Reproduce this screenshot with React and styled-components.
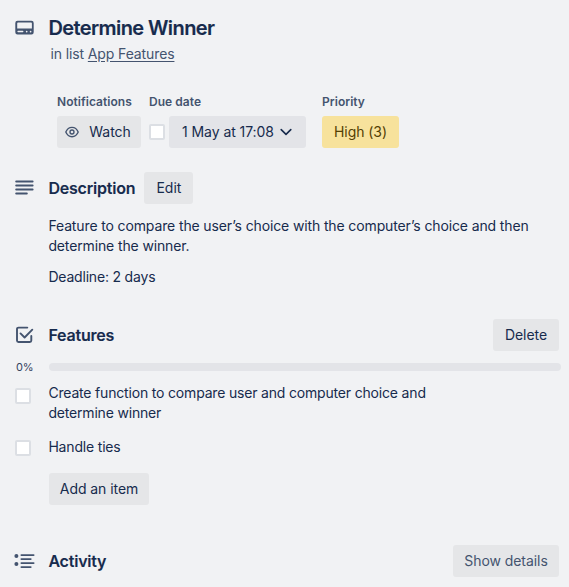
import React from "react";
import styled, { createGlobalStyle } from "styled-components";

const Global = createGlobalStyle`
  * { box-sizing: border-box; }
  body { margin: 0; background: #f1f2f4; }
`;

const Card = styled.main`
  width: 569px;
  height: 587px;
  overflow: hidden;
  background: #f1f2f4;
  color: #172b4d;
  font-family: Inter, "Liberation Sans", sans-serif;
  font-size: 14px;
  line-height: 20px;
  letter-spacing: -0.06px;
`;

const SectionRow = styled.header`
  display: flex;
  align-items: center;
  height: 32px;
  margin-top: ${(p) => p.$top || 0}px;
  padding-right: 10px;
`;

const IconSlot = styled.span`
  display: flex;
  width: 48.4px;
  padding-left: ${(p) => p.$inset ?? 15}px;
  flex: none;
  color: #44546f;
`;

const Title = styled.h1`
  margin: 0;
  font-size: 20px;
  line-height: 24px;
  font-weight: 600;
  letter-spacing: -0.58px;
  -webkit-text-stroke: 0.15px currentColor;
`;

const Heading = styled.h2`
  margin: 0 9px 0 0;
  font-size: 16px;
  line-height: 20px;
  font-weight: 600;
  letter-spacing: -0.2px;
  -webkit-text-stroke: 0.1px currentColor;
`;

const Subtitle = styled.p`
  margin: 0 0 0 50.5px;
  color: #44546f;
  letter-spacing: -0.12px;
`;

const ListLink = styled.a`
  text-decoration: underline;
  text-underline-offset: 2px;
`;

const Details = styled.div`
  display: flex;
  margin: 28px 0 0 57px;
`;

const Detail = styled.section`
  width: ${(p) => p.$width}px;
`;

const Label = styled.h3`
  margin: 0 0 4px;
  color: #44546f;
  font-size: 12px;
  line-height: 20px;
  font-weight: 600;
  letter-spacing: 0.04px;
  white-space: nowrap;
`;

const Controls = styled.div`
  display: flex;
  align-items: center;
`;

const Button = styled.button`
  display: flex;
  align-items: center;
  justify-content: center;
  flex: none;
  width: ${(p) => p.$width}px;
  height: 32px;
  margin-left: ${(p) => (p.$end ? "auto" : "0")};
  padding: 0;
  gap: ${(p) => p.$gap || 0}px;
  border: 0;
  border-radius: 3px;
  background: ${(p) => p.$background || "#e5e6e8"};
  color: ${(p) => p.$color || "#172b4d"};
  font: inherit;
  letter-spacing: inherit;
  white-space: nowrap;
`;

const WatchButton = styled(Button)`
  padding-right: 2px;
`;

const DateButton = styled(Button)`
  padding-right: 1px;
`;

const Checkbox = styled.span`
  flex: none;
  width: 16px;
  height: 16px;
  border: 2px solid #dcdfe4;
  border-radius: 2px;
  background: #fff;
`;

const DueCheckbox = styled(Checkbox)`
  margin-right: 4px;
`;

const Description = styled.div`
  padding: 12px 0 11px 48.4px;
`;

const Paragraph = styled.p`
  margin: 0;
  width: 500px;
  letter-spacing: -0.13px;

  & + & {
    margin-top: 11px;
    letter-spacing: -0.19px;
  }
`;

const Progress = styled.div`
  display: flex;
  align-items: center;
  height: 12px;
  margin-top: 10px;
`;

const Percent = styled.span`
  width: 49px;
  padding-left: 16px;
  color: #34435f;
  font-size: 11px;
  line-height: 12px;
  letter-spacing: -0.2px;
`;

const Track = styled.div`
  width: 512px;
  height: 8px;
  border-radius: 4px;
  background: #e3e4e8;
`;

const Item = styled.div`
  display: flex;
  align-items: flex-start;
  margin-top: ${(p) => p.$top}px;
`;

const CheckSlot = styled.span`
  width: 48.4px;
  flex: none;
  padding: ${(p) => p.$drop}px 0 0 15px;
  display: flex;
`;

const ItemText = styled.span`
  width: 390px;
  letter-spacing: -0.18px;
`;

const AddRow = styled.div`
  padding: 16px 0 0 49px;
`;

const CardIcon = () => (
  <svg width="19" height="16" viewBox="0 0 19 16">
    <path
      fill="currentColor"
      fillRule="evenodd"
      d="M2.5.8h14A2.2 2.2 0 0 1 18.7 3v9.2a2.2 2.2 0 0 1-2.2 2.2h-14a2.2 2.2 0 0 1-2.2-2.2V3A2.2 2.2 0 0 1 2.5.8ZM3 2.6a.8.8 0 0 0-.8.8v5.2h14.7V3.4a.8.8 0 0 0-.8-.8Z"
    />
    <path d="M3.1 11.6h4.6" stroke="#f1f2f4" strokeWidth="1.5" strokeLinecap="round" />
    <circle cx="11.7" cy="11.6" r=".85" fill="#f1f2f4" />
    <circle cx="15.6" cy="11.6" r=".85" fill="#f1f2f4" />
  </svg>
);

const EyeIcon = () => (
  <svg width="14" height="12" viewBox="0 0 14 12" fill="none" stroke="#44546f" strokeWidth="1.35">
    <path d="M.8 6C2 3 4.2 1.3 7 1.3S12 3 13.2 6C12 9 9.8 10.7 7 10.7S2 9 .8 6Z" />
    <circle cx="7" cy="6" r="2" />
  </svg>
);

const ChevronIcon = () => (
  <svg width="12" height="8" viewBox="0 0 12 8" fill="none" stroke="#172b4d" strokeWidth="1.6" strokeLinecap="round" strokeLinejoin="round">
    <path d="m1.2 1.6 4.8 4.8 4.8-4.8" />
  </svg>
);

const LinesIcon = () => (
  <svg width="19" height="16" viewBox="0 0 19 16" fill="none" stroke="currentColor" strokeWidth="2" strokeLinecap="round">
    <path d="M1.2 1.6h16.4M1.2 5.6h16.4M1.2 9.6h16.4M1.2 13.6h10.6" />
  </svg>
);

const CheckIcon = () => (
  <svg width="19" height="18" viewBox="0 0 19 18" fill="none" stroke="currentColor" strokeWidth="1.9" strokeLinecap="round" strokeLinejoin="round">
    <path d="M12.3 1.6H3.5a1.5 1.5 0 0 0-1.5 1.5v11.4A1.5 1.5 0 0 0 3.5 16h11.3a1.5 1.5 0 0 0 1.5-1.5V10" />
    <path d="m5.5 7.4 4.1 4.1L17.3 3.7" />
  </svg>
);

const ActivityIcon = () => (
  <svg width="21" height="16" viewBox="0 0 21 16" fill="none" stroke="currentColor" strokeWidth="1.9" strokeLinecap="round">
    <circle cx="2.4" cy="3.1" r="2" fill="currentColor" stroke="none" />
    <circle cx="2.4" cy="11.1" r="2" fill="currentColor" stroke="none" />
    <path d="M7.4 2.1h12.2M7.4 6.1h9.3M7.4 10.1h12.2M7.4 14.1h9.3" />
  </svg>
);

export default function App() {
  return (
    <>
      <Global />
      <Card>
        <SectionRow $top={12}>
          <IconSlot><CardIcon /></IconSlot>
          <Title>Determine Winner</Title>
        </SectionRow>
        <Subtitle>in list <ListLink>App Features</ListLink></Subtitle>

        <Details>
          <Detail $width={92}>
            <Label>Notifications</Label>
            <WatchButton $width={84} $gap={10}><EyeIcon />Watch</WatchButton>
          </Detail>
          <Detail $width={173}>
            <Label>Due date</Label>
            <Controls>
              <DueCheckbox />
              <DateButton $width={137} $gap={6} $background="#e3e4e8">1 May at 17:08<ChevronIcon /></DateButton>
            </Controls>
          </Detail>
          <Detail $width={77}>
            <Label>Priority</Label>
            <Button $width={77} $background="#f7e29c" $color="#533f04">High (3)</Button>
          </Detail>
        </Details>

        <SectionRow $top={24}>
          <IconSlot><LinesIcon /></IconSlot>
          <Heading>Description</Heading>
          <Button $width={49}>Edit</Button>
        </SectionRow>
        <Description>
          <Paragraph>Feature to compare the user’s choice with the computer’s choice and then determine the winner.</Paragraph>
          <Paragraph>Deadline: 2 days</Paragraph>
        </Description>

        <SectionRow $top={21}>
          <IconSlot><CheckIcon /></IconSlot>
          <Heading>Features</Heading>
          <Button $width={66} $end>Delete</Button>
        </SectionRow>
        <Progress>
          <Percent>0%</Percent>
          <Track />
        </Progress>
        <Item $top={10}>
          <CheckSlot $drop={5}><Checkbox /></CheckSlot>
          <ItemText>Create function to compare user and computer choice and determine winner</ItemText>
        </Item>
        <Item $top={14}>
          <CheckSlot $drop={3}><Checkbox /></CheckSlot>
          <ItemText>Handle ties</ItemText>
        </Item>
        <AddRow><Button $width={100}>Add an item</Button></AddRow>

        <SectionRow $top={40}>
          <IconSlot $inset={14}><ActivityIcon /></IconSlot>
          <Heading>Activity</Heading>
          <Button $width={106} $end $color="#44546f">Show details</Button>
        </SectionRow>
      </Card>
    </>
  );
}
